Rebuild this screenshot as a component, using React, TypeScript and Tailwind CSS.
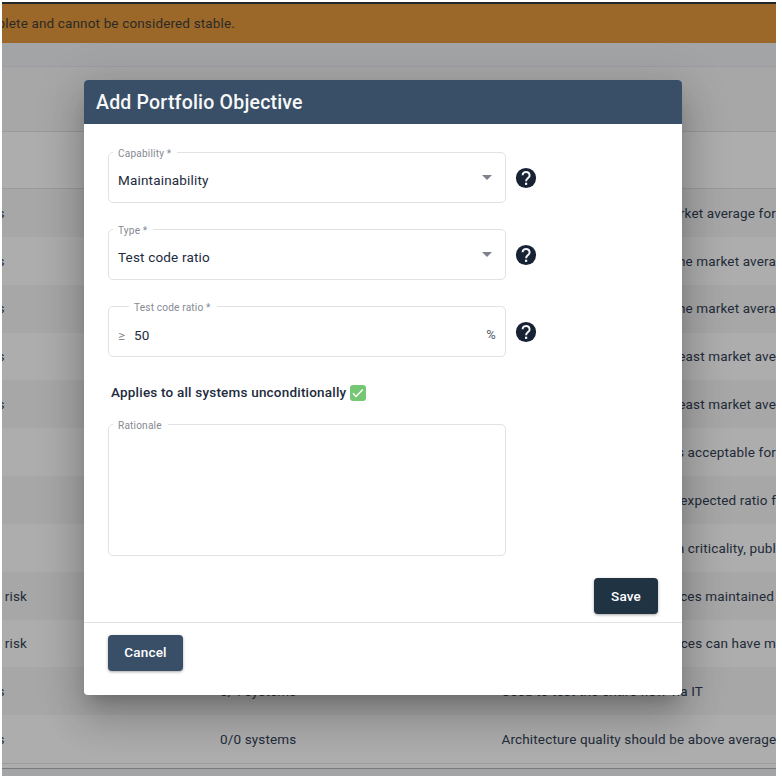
import type { ReactNode } from "react";
import { MdArrowDropDown } from "react-icons/md";

type Row = { left?: string; right: string; count?: string; start?: boolean };

// Rows with `start` begin at the rationale column; the others run out to the right edge.
const rows: Row[] = [
  { left: "s", right: "market average for" },
  { left: "s", right: "the market avera" },
  { left: "s", right: "the market avera" },
  { left: "s", right: "least market ave" },
  { left: "s", right: "least market ave" },
  { right: "is acceptable for" },
  { right: "expected ratio f" },
  { right: "in criticality, publ" },
  { left: "risk", right: "services maintained" },
  { left: "risk", right: "services can have m" },
  { left: "s", count: "0/4 systems", right: "Used to test the entire flow via IT", start: true },
  { left: "s", count: "0/0 systems", right: "Architecture quality should be above average", start: true },
];

function Page() {
  return (
    <div className="h-[774px] w-[774px] overflow-hidden bg-[#a2a4a6] text-[13.5px] tracking-[0.15px] text-[#232b39]">
      <div className="flex h-[41px] items-center overflow-hidden border-t-2 border-[#22282a] bg-[#9b6829]">
        <div className="flex w-[233px] shrink-0 justify-end whitespace-nowrap text-[#2c2a26]">
          plete and cannot be considered stable.
        </div>
      </div>
      <div className="h-[24px] border-b border-[#9b9da0]" />
      <div className="h-[65px] border-b border-[#98999b] bg-[#a7a7a7]" />
      <div className="h-[57px] border-b border-[#999a9b] bg-[#adadad]" />
      {rows.map((row, i) => (
        <div
          key={i}
          className={`flex h-[47.85px] items-center overflow-hidden whitespace-nowrap ${i % 2 ? "bg-[#adadad]" : "bg-[#a6a7a6]"}`}
        >
          <div className={`flex shrink-0 justify-end ${row.left === "risk" ? "w-[25px]" : "w-[2.5px]"}`}>{row.left}</div>
          <div className={`shrink-0 ${row.left === "risk" ? "w-[193px]" : "w-[215.5px]"}`} />
          <div className="w-[281.5px] shrink-0">{row.count}</div>
          <div className={`flex min-w-0 flex-1 ${row.start ? "justify-start" : "justify-end"} ${i === 8 ? "pr-[2px]" : ""}`}>
            {row.right}
          </div>
        </div>
      ))}
      <div className="h-[5px] border-t border-[#9c9d9e] bg-[#adadad]" />
      <div className="h-[8px] border-t border-[#77797b] bg-[#a2a4a6]" />
    </div>
  );
}

function HelpIcon() {
  return (
    <svg viewBox="0 0 24 24" className="ml-[8px] mt-[20px] size-6">
      <circle cx="12" cy="12" r="10.1" fill="#182235" />
      <path d="M8.6 9.3a3.5 3.3 0 1 1 5.7 2.5C13 12.9 12.1 13.3 12.1 15.2" fill="none" stroke="#f4f5f7" strokeWidth="2" />
      <rect x="11" y="16.7" width="2.2" height="2.2" fill="#f4f5f7" />
    </svg>
  );
}

function Field({ label, inset, tall, children }: { label: string; inset?: boolean; tall?: boolean; children?: ReactNode }) {
  return (
    <fieldset
      className={`w-[398px] rounded-[5px] border border-[#e1e2e4] ${tall ? "h-[138px]" : "h-[57px]"} ${inset ? "pl-[20px]" : "pl-[4px]"}`}
    >
      <legend className="h-[13px] pl-[5px] pr-[6px] text-[10.1px] leading-[16px] tracking-[0.18px] text-[#858a92]">{label}</legend>
      {children}
    </fieldset>
  );
}

function SelectRow({ label, value }: { label: string; value: string }) {
  return (
    <div className="flex h-[77px] items-start">
      <Field label={label}>
        <div className="flex h-[37px] items-center justify-between pl-[5px] pr-[6px] pt-[6px]">
          <span>{value}</span>
          <MdArrowDropDown className="-mt-[8px] size-[24px] text-[#7d828b]" />
        </div>
      </Field>
      <HelpIcon />
    </div>
  );
}

function Dialog() {
  return (
    <div className="flex h-[615px] w-[597.5px] flex-col overflow-hidden rounded-[4px] bg-white text-[13.5px] tracking-[0.18px] text-[#222b3d]">
      <h1 className="flex h-[44px] shrink-0 items-center bg-[#394f67] pl-[12px] pt-px text-[19.5px] font-medium tracking-[0.2px] text-[#f7f8f9]">
        Add Portfolio Objective
      </h1>
      <div className="flex h-[498px] shrink-0 flex-col pl-[24px] pt-[22px]">
        <SelectRow label="Capability *" value="Maintainability" />
        <SelectRow label="Type *" value="Test code ratio" />
        <div className="flex h-[77.6px] items-start">
          <Field label="Test code ratio *" inset>
            <div className="-ml-[15px] flex h-[37px] items-center pr-[9px] pt-[7px]">
              <span className="w-[20px] pl-[4px] text-[#858a92]">≥</span>
              <span>50</span>
              <span className="ml-auto text-[13px] text-[#555c68]">%</span>
            </div>
          </Field>
          <HelpIcon />
        </div>
        <div className="flex h-[39px] items-center pb-[9px] pl-[3px] font-medium tracking-[0.2px]">
          Applies to all systems unconditionally
          <span className="ml-[3.5px] flex size-4 items-center justify-center rounded-[3px] bg-[#75c774]">
            <svg viewBox="0 0 16 16" className="size-4" fill="none" stroke="white" strokeWidth="1.4">
              <path d="M3 8.3 6 11.5 12.8 4.5" />
            </svg>
          </span>
        </div>
        <div className="pt-[1.4px]">
          <Field label="Rationale" tall />
        </div>
        <button className="ml-auto mr-[23.5px] mt-[22px] h-[36px] w-[64px] shrink-0 rounded-[4px] bg-[#203343] font-medium text-white shadow-[0_1px_3px_rgba(0,0,0,0.35)]">
          Save
        </button>
      </div>
      <div className="flex-1 border-t border-[#e2e3e4] pl-[24px] pt-[12px]">
        <button className="h-[36px] w-[75px] rounded-[4px] bg-[#394f67] pb-px font-medium text-white shadow-[0_1px_3px_rgba(0,0,0,0.35)]">
          Cancel
        </button>
      </div>
    </div>
  );
}

export default function App() {
  return (
    <div className="h-[782px] w-[782px] overflow-hidden bg-white pl-[2px] pt-[2px] font-[Roboto,sans-serif]">
      <div className="relative h-[774px] w-[774px] overflow-hidden">
        <Page />
        <div className="absolute left-[82px] top-[78px] rounded-[4px] shadow-[0_11px_15px_-7px_rgba(0,0,0,0.2),0_24px_38px_3px_rgba(0,0,0,0.14),0_9px_46px_8px_rgba(0,0,0,0.12)]">
          <Dialog />
        </div>
      </div>
    </div>
  );
}
